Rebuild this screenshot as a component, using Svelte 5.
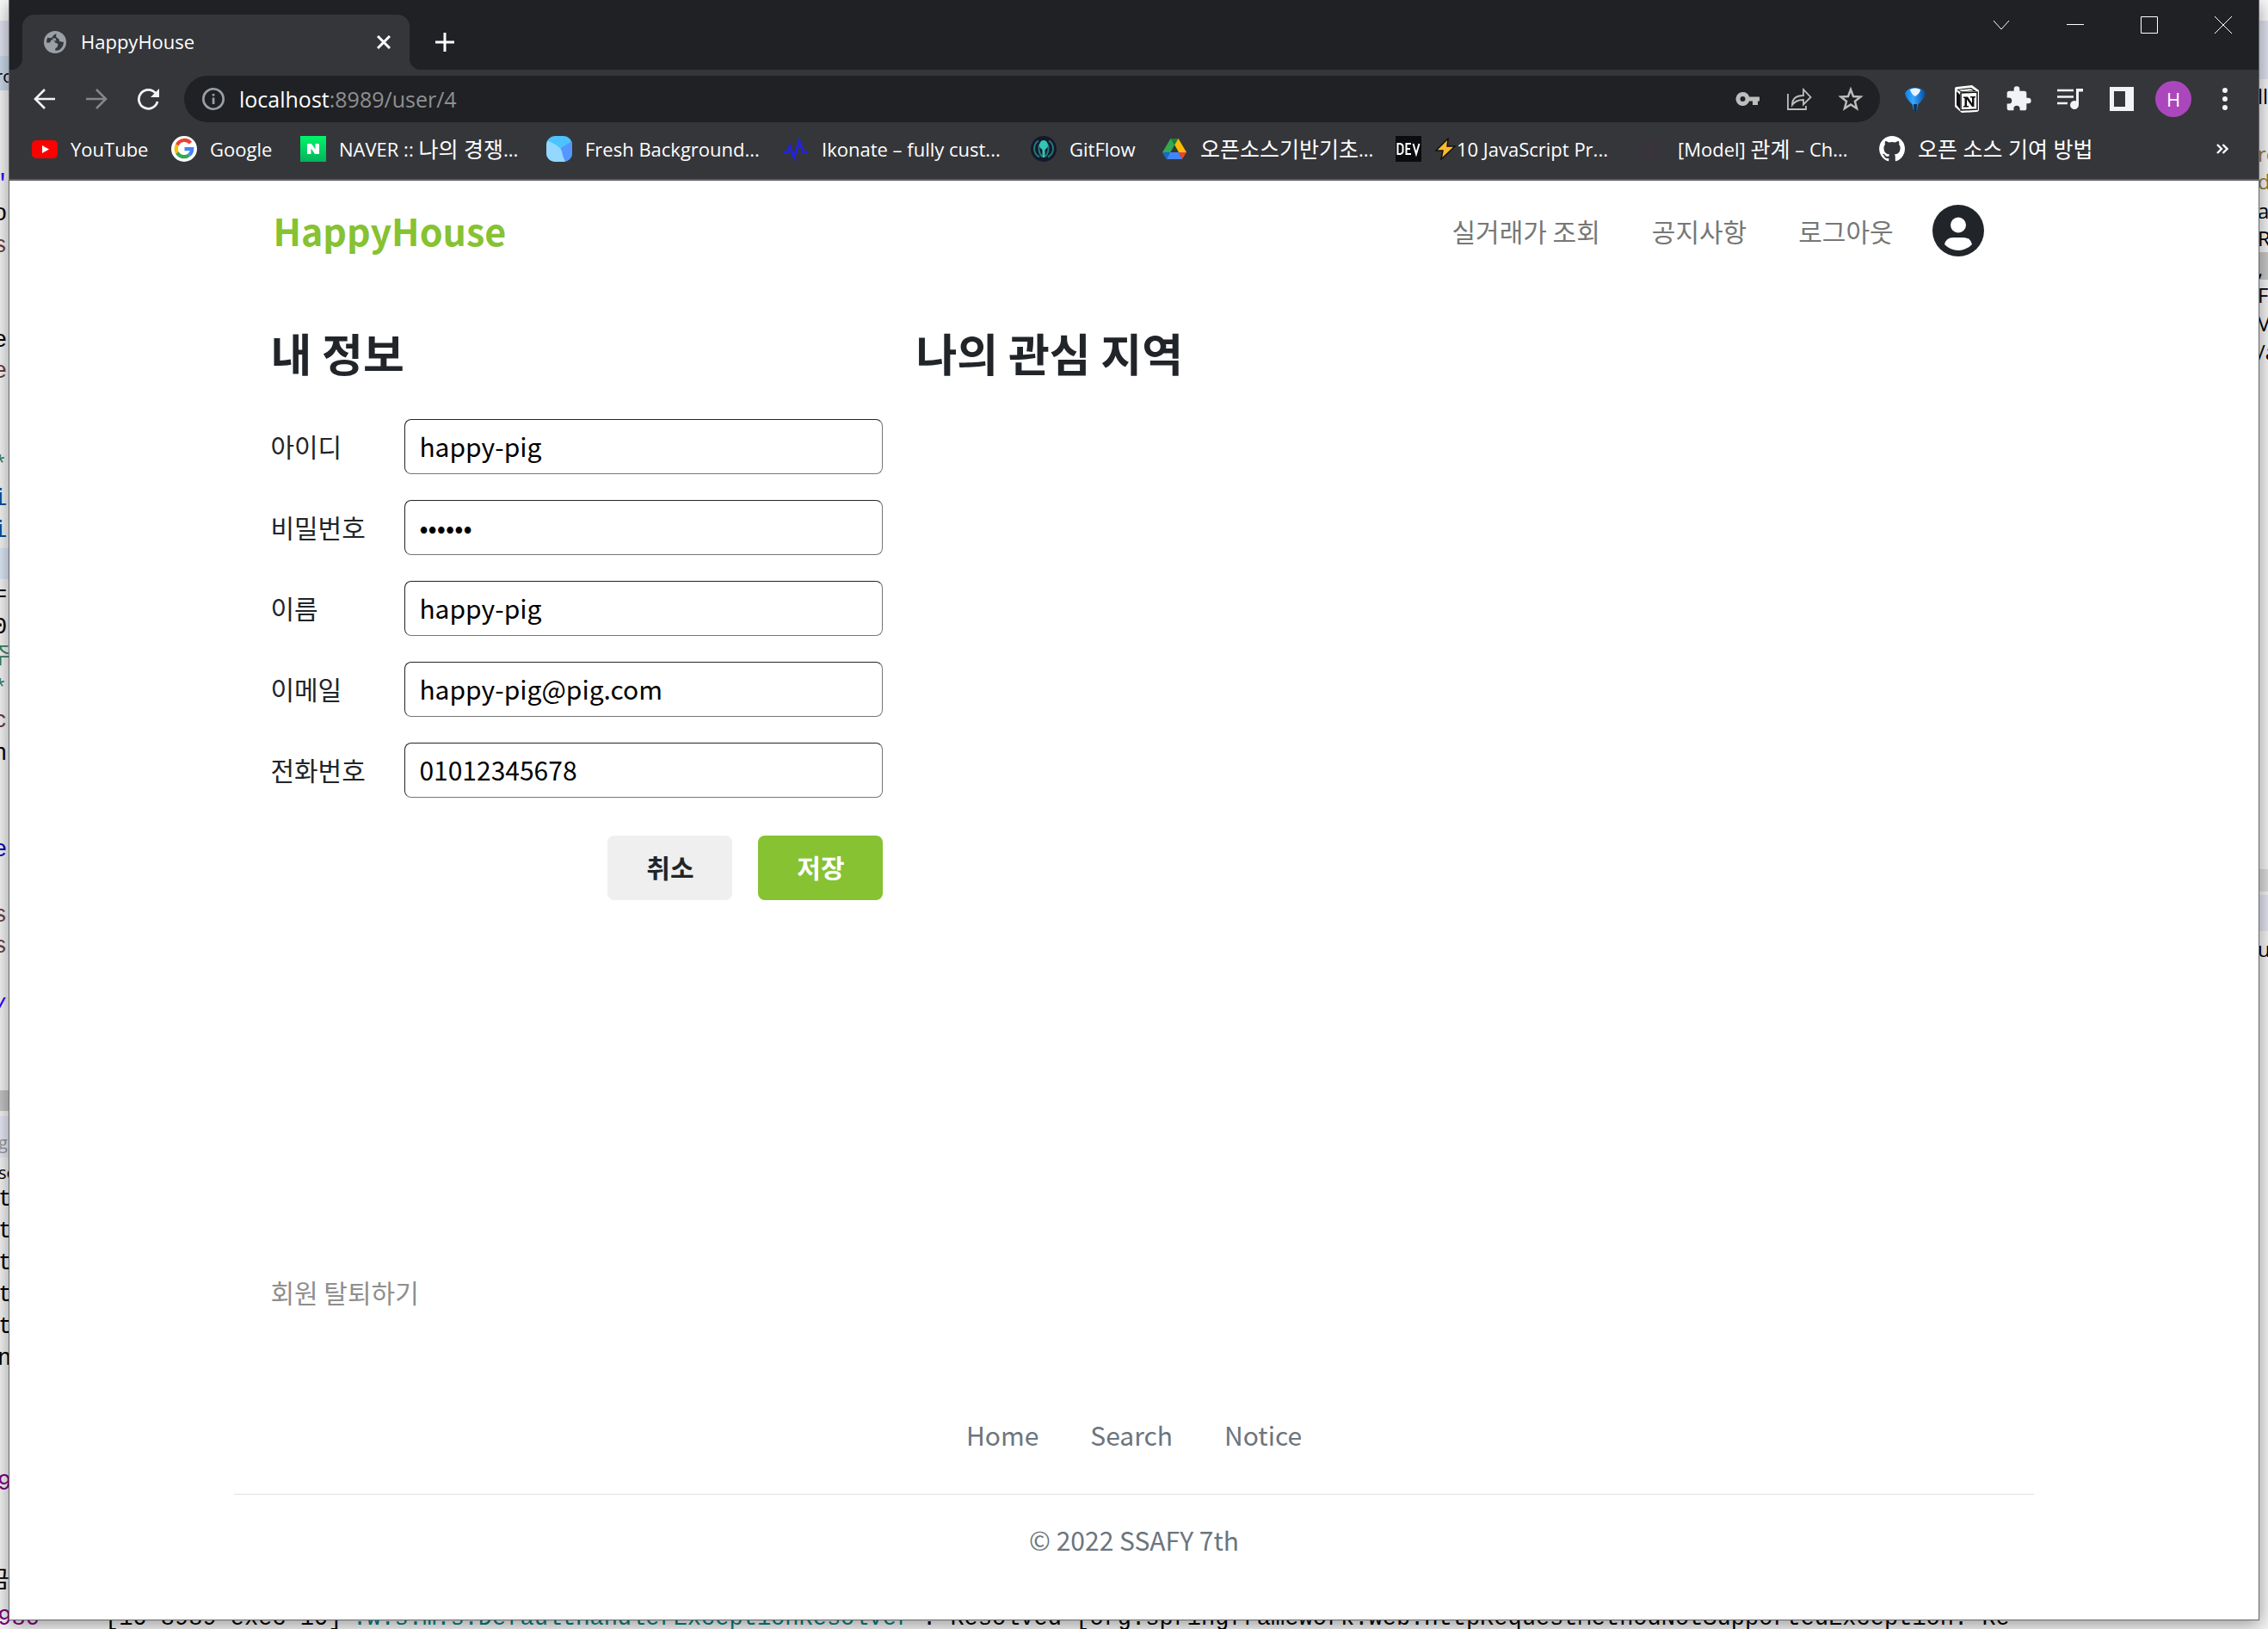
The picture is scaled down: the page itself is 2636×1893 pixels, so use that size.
<script>
  const bookmarks = [
    { icon: 'youtube', text: 'YouTube' },
    { icon: 'google', text: 'Google' },
    { icon: 'naver', text: 'NAVER :: 나의 경쟁...' },
    { icon: 'fresh', text: 'Fresh Background...' },
    { icon: 'ikonate', text: 'Ikonate – fully cust...' },
    { icon: 'gitflow', text: 'GitFlow' },
    { icon: 'drive', text: '오픈소스기반기초...' },
    { icon: 'dev', text: '10 JavaScript Pr...', bolt: true },
    { icon: 'blank', text: '[Model] 관계 – Ch...' },
    { icon: 'github', text: '오픈 소스 기여 방법' },
  ];
  const split = (t) => t.split(/([\uAC00-\uD7A3]+(?: [\uAC00-\uD7A3]+)*)/).filter((s) => s);
  const isKo = (s) => /[\uAC00-\uD7A3]/.test(s);

  let fields = $state([
    { id: 'userid', label: '아이디', type: 'text', value: 'happy-pig' },
    { id: 'password', label: '비밀번호', type: 'password', value: 'secret' },
    { id: 'name', label: '이름', type: 'text', value: 'happy-pig' },
    { id: 'email', label: '이메일', type: 'text', value: 'happy-pig@pig.com' },
    { id: 'phone', label: '전화번호', type: 'text', value: '01012345678' },
  ]);

  // Code editor behind the browser: fragments visible at its left and right edges
  const left = [
    { y: 89, x: -5, t: 'ro', c: '#000', small: true }, { y: 214, t: '"', c: '#2a00ff' }, { y: 249, t: 'os', c: '#000' },
    { y: 286, t: 'st', c: '#6a3e3e' }, { y: 396, t: 'er', c: '#000' }, { y: 432, t: 'er', c: '#6a3e3e' },
    { y: 506, x: 6, t: '-', c: '#000' }, { y: 541, t: '*', c: '#3f7f5f' }, { y: 580, t: 'in', c: '#0050a0' },
    { y: 617, t: 'in', c: '#0050a0' }, { y: 692, t: '=', c: '#000' }, { y: 729, t: '0n', c: '#000' },
    { y: 764, x: -12, t: '주', c: '#3f7f5f' }, { y: 801, t: '*', c: '#3f7f5f' }, { y: 838, t: 'c:', c: '#6a3e3e' },
    { y: 876, t: 'nl', c: '#000' }, { y: 988, t: 'er', c: '#0000c0' }, { y: 1064, t: 's', c: '#6a3e3e' },
    { y: 1100, t: 's', c: '#6a3e3e' }, { y: 1172, t: '/p', c: '#2a00ff' }, { y: 1328, x: -2, t: 'g', c: '#999', small: true },
    { y: 1363, x: -2, t: 'se', c: '#000', small: true }, { y: 1394, x: -2, t: 't', c: '#000' }, { y: 1431, x: -2, t: 't', c: '#000' },
    { y: 1468, x: -2, t: 't', c: '#000' }, { y: 1505, x: -2, t: 't', c: '#000' }, { y: 1542, x: -2, t: 't', c: '#000' },
    { y: 1579, x: -3, t: 'n', c: '#000' }, { y: 1724, x: -3, t: '9', c: '#7f007f' }, { y: 1838, x: -14, t: '금', c: '#000' },
  ];
  const right = [
    { y: 112, t: 'll', c: '#000' }, { y: 179, t: 'ro', c: '#937a3c' }, { y: 211, t: 'd"', c: '#937a3c' },
    { y: 245, t: 'a', c: '#000' }, { y: 277, t: 'Re', c: '#000' }, { y: 312, t: ',', c: '#000' },
    { y: 343, t: 'F', c: '#000' }, { y: 376, t: 'V', c: '#000' }, { y: 409, t: '/a', c: '#000' },
    { y: 1103, t: 'us', c: '#000' },
  ];
</script>

{#snippet mark(name)}
  <svg class="mark" viewBox="0 0 30 30" aria-hidden="true">
    {#if name === 'youtube'}
      <rect x="0" y="5" width="30" height="21" rx="5" fill="#f00" /><path d="M12 11l8 4.500-8 4.500z" fill="#fff" />
    {:else if name === 'google'}
      <circle cx="15" cy="15" r="15" fill="#fff" />
      <g fill="none" stroke-width="4.200">
        <path d="M22.500 8.200A9.300 9.300 0 0 0 6.900 10.500" stroke="#ea4335" />
        <path d="M6.900 10.500A9.300 9.300 0 0 0 6.900 19.500" stroke="#fbbc05" />
        <path d="M6.900 19.500A9.300 9.300 0 0 0 21 22" stroke="#34a853" />
        <path d="M21 22A9.300 9.300 0 0 0 24.200 15.100H15.500" stroke="#4285f4" />
      </g>
    {:else if name === 'naver'}
      <defs><linearGradient id="nv" x1="0" y1="0" x2="0" y2="1"><stop offset="0" stop-color="#00f56a" /><stop offset="1" stop-color="#04b35c" /></linearGradient></defs>
      <rect width="30" height="30" fill="url(#nv)" /><path d="M8 9h5l4.500 6.500V9H22v12h-5l-4.500-6.500V21H8z" fill="#fff" />
    {:else if name === 'fresh'}
      <defs><clipPath id="fb"><rect width="30" height="30" rx="10" /></clipPath></defs>
      <g clip-path="url(#fb)"><rect width="30" height="30" fill="#4cc3ff" /><path d="M30 6L17 14q-3 8 4 16h9z" fill="#5596ff" /><path d="M0 5q16 6 18 13 1 6 4 12H0z" fill="#94d8ff" /></g>
    {:else if name === 'ikonate'}
      <path d="M1 19h4l3-7 5 13 6-19 5 13h5" fill="none" stroke="#2323dd" stroke-width="3" />
    {:else if name === 'gitflow'}
      <circle cx="15" cy="15" r="15" fill="#141a2b" /><path d="M9 5.500a11 11 0 0 0 1 19M21 5.500a11 11 0 0 1-1 19M10 10q-2 8 3 14M20 10q2 8-3 14" fill="none" stroke="#237a7c" stroke-width="2" /><path d="M15 5c4 0 6 5 4.500 8-1 2-3 2-3 4v8h-3v-8c0-2-2-2-3-4C9 10 11 5 15 5z" fill="#35c5b5" />
    {:else if name === 'drive'}
      <path d="M10.500 3h9l-4.500 8L6 27l-5-8z" fill="#34a853" /><path d="M19.500 3L29 19h-9L11 3z" fill="#fbbc04" /><path d="M15 11l-4.500-8h9z" fill="#188038" /><path d="M10 19h10l4 8H6z" fill="#4285f4" /><path d="M20 19h9l-5 8z" fill="#ea4335" /><path d="M1 19h9l-4 8z" fill="#1967d2" /><path d="M15 11l4.500 8h-9z" fill="#35363a" />
    {:else if name === 'dev'}
      <rect width="30" height="30" fill="#0b0c0e" />
      <path d="M2.500 9v12h3q3-1 3-3v-6q0-2-3-3zM18 9h-5.500v12H18M12.500 15H17M20.500 9L24 21 27.500 9" fill="none" stroke="#fff" stroke-width="2" />
    {:else if name === 'blank'}
      <circle cx="13" cy="15" r="13" fill="#37353b" />
    {:else}
      <path d="M15 0a15 15 0 0 0-4.700 29.200c.7.100 1-.3 1-.7v-2.600c-4.200.9-5-2-5-2-.7-1.700-1.700-2.200-1.700-2.200-1.300-.9.100-.9.100-.9 1.500.1 2.300 1.500 2.300 1.500 1.300 2.300 3.500 1.600 4.400 1.200.1-1 .5-1.600.9-2-3.300-.4-6.800-1.700-6.800-7.400 0-1.600.6-3 1.500-4-.1-.4-.7-1.900.2-4 0 0 1.200-.4 4.100 1.500a14 14 0 0 1 7.500 0c2.900-1.900 4.100-1.500 4.100-1.500.8 2.100.3 3.600.2 4 1 1 1.500 2.400 1.500 4 0 5.700-3.500 7-6.800 7.400.5.500 1 1.400 1 2.800v4.200c0 .4.300.9 1 .7A15 15 0 0 0 15 0z" fill="#fff" />
    {/if}
  </svg>
{/snippet}

<div class="desktop">
  <div class="backdrop" aria-hidden="true">
    <div class="band top"></div>
    <div class="band tabs"></div>
    <div class="band file"></div>
    <div class="band selected"></div>
    <div class="band scroll"></div>
    <div class="band panel"></div>
    <div class="band rsel"></div>
    <div class="band rscroll"></div>
    <div class="band rpanel"></div>
    {#each left as f}<span class="frag" class:small={f.small} style:top="{f.y - 16}px" style:left="{f.x ?? -8}px" style:color={f.c}>{f.t}</span>{/each}
    {#each right as f}<span class="frag r" style:top="{f.y - 16}px" style:color={f.c}>{f.t}</span>{/each}
    <div class="console">
      <span class="pid">9986</span>
      <span class="thread">[10-8989-exec-10]</span>
      <span class="logger">.w.s.m.s.DefaultHandlerExceptionResolver</span>
      <span class="msg">: Resolved [org.springframework.web.HttpRequestMethodNotSupportedException: Re</span>
    </div>
  </div>

  <div class="window">
    <div class="strip">
      <div class="tab">
        <svg width="26" height="26" viewBox="0 0 26 26"><circle cx="13" cy="13" r="13" fill="#9aa0a6" /><path d="M3 13.500q0-4 1.500-6 2.500 1.500 5 0 1.500-3.500 5-4.500-1 3 .5 5 3 .5 3 4l5 1q-.5 6-5 9-2.500 1-5 .5 0-3 2.500-3.500l1-4-3.500-1.500q-.5-3-4-3.500L7 13.500z" fill="#35363a" /><path d="M4 6.500q3-4 8-4-1 3-4.500 5.500zM9.500 8.500h4l1 3-3-.5z" fill="#9aa0a6" /></svg>
        <span class="tab-title">HappyHouse</span>
        <button class="bare" aria-label="Close tab"><svg width="16" height="16" viewBox="0 0 16 16"><path d="M1 1l14 14M15 1L1 15" stroke="#fff" stroke-width="3" /></svg></button>
      </div>
      <button class="bare plus" aria-label="New tab"><svg width="24" height="24" viewBox="0 0 24 24"><path d="M12 1v22M1 12h22" stroke="#fff" stroke-width="3" /></svg></button>
      <div class="controls">
        <button class="bare" aria-label="Search tabs"><svg width="20" height="20" viewBox="0 0 20 20"><path d="M1 5l9 10 9-10" stroke="#fff" fill="none" /></svg></button>
        <button class="bare" aria-label="Minimize"><svg width="20" height="20" viewBox="0 0 20 20"><path d="M0 9.500h20" stroke="#fff" /></svg></button>
        <button class="bare" aria-label="Maximize"><svg width="20" height="20" viewBox="0 0 20 20"><path d="M.5.5h19v19H.5z" stroke="#fff" fill="none" /></svg></button>
        <button class="bare" aria-label="Close"><svg width="20" height="20" viewBox="0 0 20 20"><path d="M0 0l20 20M20 0L0 20" stroke="#fff" /></svg></button>
      </div>
    </div>

    <div class="toolbar">
      <button class="bare slot" aria-label="Back"><svg width="26" height="26" viewBox="0 0 26 26"><path d="M25 13H2M13 2L2 13l11 11" stroke="#f1f3f4" stroke-width="2.600" fill="none" /></svg></button>
      <button class="bare slot" aria-label="Forward"><svg width="26" height="26" viewBox="0 0 26 26"><path d="M1 13h23M13 2l11 11-11 11" stroke="#85868a" stroke-width="2.600" fill="none" /></svg></button>
      <button class="bare slot" aria-label="Reload"><svg width="26" height="26" viewBox="0 0 26 26"><path d="M22 6.500A11 11 0 1 0 24 16" stroke="#f1f3f4" stroke-width="2.800" fill="none" /><path d="M26 1v10H16z" fill="#f1f3f4" /></svg></button>
      <div class="omnibox">
        <svg width="26" height="26" viewBox="0 0 26 26"><circle cx="13" cy="13" r="11.700" stroke="#9aa0a6" stroke-width="2.600" fill="none" /><path d="M11.700 11.500h2.700V19h-2.700zM11.700 7h2.700v2.600h-2.700z" fill="#9aa0a6" /></svg>
        <span class="url"><b>localhost</b>:8989/user/4</span>
        <button class="bare slot" aria-label="Passwords"><svg width="28" height="28" viewBox="0 0 28 28"><path fill-rule="evenodd" d="M8.500 6a8 8 0 1 0 7.600 10.500H20V21h6v-4.500h2v-5H16.100A8 8 0 0 0 8.500 6zm0 5a3 3 0 1 1 0 6 3 3 0 0 1 0-6z" fill="#bdbdbd" /></svg></button>
        <button class="bare slot" aria-label="Share"><svg width="30" height="30" viewBox="0 0 30 30"><path d="M2 9v18h21v-4M7 22q0-11 13-11V4l8.500 9L20 21.500V16q-9 0-13 6z" stroke="#bdbdbd" stroke-width="1.800" fill="none" /></svg></button>
        <button class="bare slot" aria-label="Bookmark"><svg width="30" height="30" viewBox="0 0 30 30"><path d="M15 4l3 8 8.500.5-6.600 5.300 2.200 8.200L15 21.400 7.900 26l2.200-8.200L3.500 12.500 12 12z" stroke="#bdbdbd" stroke-width="2.400" fill="none" /></svg></button>
      </div>
      <div class="tools">
        <button class="bare slot" aria-label="Balloon extension"><svg width="30" height="30" viewBox="0 0 30 30"><defs><linearGradient id="bl"><stop offset="0" stop-color="#0a7fe8" /><stop offset=".4" stop-color="#3aa8ff" /><stop offset="1" stop-color="#034a9c" /></linearGradient></defs><path d="M3 8Q6 2 15 2t12 6q0 5-9 14l-1 6q-2 1-4 0l-1-6Q3 13 3 8z" fill="url(#bl)" /><path d="M9 4q6-3 12 0 0 4-6 8-5-3-6-8z" fill="#e8f5ff" /><path d="M13 21h4l-.5 8h-3z" fill="#07315e" /></svg></button>
        <button class="bare slot" aria-label="Notion"><svg width="30" height="32" viewBox="0 0 30 32"><path d="M1 4q0-2 2-2l18-2 8 6v22q0 3-3 3L9 32l-8-7z" fill="#fff" /><path d="M3 5l17-2 6 4-18 1zM3 7l4 4v17l-4-5z" fill="#111" /><path d="M5.500 5.500l14-1.300 3.500 2-14 1z" fill="#fff" /><path d="M8 9l19-1v20L8 29z" fill="#fff" stroke="#111" stroke-width="1.500" /><path d="M11 13.500h5l5 7.500v-6.500h-2v-1.500h6v1.500h-1.500V25H21l-6-8.500V24h2v1.500h-6V24h1.500v-9H11z" fill="#111" /></svg></button>
        <button class="bare slot" aria-label="Extensions"><svg width="32" height="32" viewBox="0 0 24 24"><path d="M20.500 11H19V7a2 2 0 0 0-2-2h-4V3.500a2.500 2.500 0 0 0-5 0V5H4a2 2 0 0 0-2 2v3.800h1.500a2.700 2.700 0 0 1 0 5.400H2V20c0 1.100.9 2 2 2h3.800v-1.500a2.700 2.700 0 0 1 5.400 0V22H17a2 2 0 0 0 2-2v-4h1.500a2.500 2.500 0 0 0 0-5z" fill="#f1f3f4" /></svg></button>
        <button class="bare slot" aria-label="Media"><svg width="32" height="28" viewBox="0 0 32 28"><path d="M1 4h19M1 11.500h19M1 19h12" stroke="#f1f3f4" stroke-width="2.600" /><path d="M23 2h8v3.500h-5V21a5 5 0 1 1-3-4.500z" fill="#f1f3f4" /></svg></button>
        <button class="bare slot" aria-label="Side panel"><svg width="28" height="28" viewBox="0 0 28 28"><path fill-rule="evenodd" d="M0 0h28v28H0zM5 5v18h13V5z" fill="#f1f3f4" /></svg></button>
        <button class="bare slot" aria-label="Profile"><span class="profile">H</span></button>
        <button class="bare slot" aria-label="Menu"><svg width="8" height="28" viewBox="0 0 8 28"><g fill="#f1f3f4"><circle cx="4" cy="4" r="3" /><circle cx="4" cy="14" r="3" /><circle cx="4" cy="24" r="3" /></g></svg></button>
      </div>
    </div>

    <div class="bookmarks">
      {#each bookmarks as b}
        <a href="#top" class="bm">
          {@render mark(b.icon)}
          <span class="bm-text">{#if b.bolt}<svg class="bolt" viewBox="0 0 26 26" aria-hidden="true"><path d="M16 1L2 15h8L8 25 24 10h-9z" fill="#fdb92c" stroke="#111" stroke-width="1.500" /></svg>{/if}{#each split(b.text) as s}<span class:ko={isKo(s)}>{s}</span>{/each}</span>
        </a>
      {/each}
      <button class="bare more" aria-label="More bookmarks"><svg width="14" height="12" viewBox="0 0 14 12"><path d="M1 1l5 5-5 5M7.500 1l5 5-5 5" stroke="#fff" stroke-width="2.400" fill="none" /></svg></button>
    </div>

    <div class="page" id="top">
      <header>
        <a href="#top" class="brand">HappyHouse</a>
        <nav>
          <a href="#top">실거래가 조회</a>
          <a href="#top">공지사항</a>
          <a href="#top">로그아웃</a>
        </nav>
        <a href="#top" class="avatar" aria-label="내 정보"><svg width="60" height="60" viewBox="0 0 60 60"><circle cx="30" cy="30" r="30" fill="#212529" /><circle cx="30" cy="23.500" r="9" fill="#fff" /><path d="M14 46q2-8 10-8h12q8 0 10 8-7 7-16 7t-16-7z" fill="#fff" /></svg></a>
      </header>

      <main>
        <div class="columns">
          <section>
            <h2>내 정보</h2>
            <form onsubmit={(e) => e.preventDefault()}>
              {#each fields as f}
                <div class="row">
                  <label for={f.id}>{f.label}</label>
                  <input id={f.id} type={f.type} bind:value={f.value} />
                </div>
              {/each}
              <div class="actions">
                <button type="button" class="cancel">취소</button>
                <button type="submit" class="save">저장</button>
              </div>
            </form>
          </section>
          <section>
            <h2>나의 관심 지역</h2>
          </section>
        </div>
        <a href="#top" class="leave">회원 탈퇴하기</a>
      </main>

      <footer>
        <div class="links">
          <a href="#top">Home</a>
          <a href="#top">Search</a>
          <a href="#top">Notice</a>
        </div>
        <p>© 2022 SSAFY 7th</p>
      </footer>
    </div>
  </div>
</div>

<style>
  :global(body) { margin: 0; }
  * { box-sizing: border-box; }
  a { text-decoration: none; color: inherit; }
  button { font-family: inherit; cursor: pointer; }
  svg { display: block; flex: none; }
  .bare { display: flex; align-items: center; justify-content: center; padding: 0; border: 0; background: none; color: #fff; }

  .desktop { position: relative; min-height: 100vh; padding: 0 10px 10px; overflow: hidden; background: #f4f4f5; display: flex; flex-direction: column; }

  .backdrop { position: absolute; inset: 0; font-family: "Liberation Mono", "Noto Sans CJK KR", monospace; font-size: 27px; line-height: 32px; overflow: hidden; white-space: pre; }
  .frag { position: absolute; }
  .small { font-family: "Open Sans", sans-serif; font-size: 20px; }
  .frag.r { left: calc(100% - 12px); font-family: "Open Sans", sans-serif; font-size: 24px; }
  .band { position: absolute; left: 0; right: 0; }
  .top { top: 0; height: 24px; background: #fafafa; }
  .tabs { top: 24px; height: 68px; background: #dfe2ef; }
  .file { top: 65px; height: 40px; right: 50%; background: #c9d8e8; }
  .selected { top: 637px; height: 36px; right: 50%; background: #dce8f6; }
  .scroll { top: 1267px; height: 24px; right: 50%; background: #c4c4c4; }
  .panel { top: 1297px; height: 48px; right: 50%; background: #e6e9f6; }
  .rsel { top: 293px; height: 32px; left: 50%; background: #c8c8c8; }
  .rscroll { top: 1010px; height: 26px; left: 50%; background: #dcdcdc; }
  .rpanel { top: 1040px; height: 42px; left: 50%; background: #e2e4ef; }
  .console span { position: absolute; bottom: -4px; }
  .pid { left: -19px; color: #7f007f; }
  .thread { left: 122px; }
  .logger { left: 410px; color: #007f7f; }
  .msg { left: 1072px; }

  .window { position: relative; flex: 1; display: flex; flex-direction: column; background: #fff; border: 1px solid #66676a; border-top: 0; box-shadow: 0 4px 20px rgba(0, 0, 0, .4); font-family: "Open Sans", "Noto Sans CJK KR", sans-serif; }

  .strip { display: flex; align-items: flex-end; height: 81px; background: #202124; }
  .tab { position: relative; display: flex; align-items: center; width: 450px; height: 64px; margin-left: 15px; padding: 0 22px 0 25px; border-radius: 14px 14px 0 0; background: #35363a; color: #fff; }
  .tab::before, .tab::after { content: ""; position: absolute; bottom: 0; width: 14px; height: 14px; }
  .tab::before { left: -14px; background: radial-gradient(circle at 0 0, #202124 14px, #35363a 15px); }
  .tab::after { right: -14px; background: radial-gradient(circle at 100% 0, #202124 14px, #35363a 15px); }
  .tab-title { flex: 1; padding: 0 0 2px 17px; font-size: 22px; line-height: 32px; }
  .plus { width: 82px; height: 64px; }
  .controls { display: flex; gap: 4px; align-self: flex-start; margin-left: auto; }
  .controls .bare { width: 82px; height: 58px; }

  .toolbar { display: flex; align-items: center; height: 67px; padding: 0 9px 0 11px; background: #35363a; }
  .slot { width: 60px; height: 52px; flex: none; }
  .omnibox { flex: 1; display: flex; align-items: center; height: 54px; margin-left: 12px; padding: 0 4px 0 21px; border-radius: 27px; background: #202124; }
  .url { flex: 1; padding-left: 17px; color: #8e9093; font-size: 25px; line-height: 36px; }
  .url b { font-weight: 400; color: #fff; }
  .tools { display: flex; margin-left: 11px; }
  .profile { width: 42px; height: 42px; border-radius: 50%; background: #ab47bc; color: #fff; font-size: 22px; line-height: 42px; text-align: center; }

  .bookmarks { display: grid; grid-template-columns: 162px 150px 286px 275px 288px 152px 272px 283px 279px 1fr 60px; align-items: center; height: 62px; padding: 0 12px 10px 26px; border-bottom: 2px solid #5f6064; background: #35363a; color: #fff; white-space: nowrap; }
  .bm { display: flex; align-items: center; gap: 15px; }
  .mark { width: 30px; height: 30px; }
  .bm-text { display: flex; align-items: center; white-space: pre; font-size: 22px; line-height: 32px; }
  .ko { font-size: 25px; }
  .bolt { width: 26px; height: 26px; }
  .more { height: 40px; }

  .page { flex: 1; width: 80%; margin: 0 auto; font-family: "Noto Sans CJK KR", "Noto Sans", sans-serif; color: #212529; }
  header { display: flex; align-items: center; height: 116px; padding: 0 58px 0 45px; }
  .brand { flex: 1; padding-bottom: 2px; color: #86c232; font-size: 43px; line-height: 60px; font-weight: 700; }
  nav { display: flex; gap: 60px; margin-right: 45px; color: #777; font-size: 30px; line-height: 44px; }
  main { padding: 48px 42px 0; }
  .columns { display: grid; grid-template-columns: 712px 1fr; gap: 38px; min-height: 1105px; }
  h2 { margin: 0 0 41px; font-size: 52px; line-height: 72px; font-weight: 700; }
  form { display: flex; flex-direction: column; gap: 30px; }
  .row { display: grid; grid-template-columns: 156px 1fr; align-items: center; }
  label { padding-bottom: 2px; font-size: 30px; line-height: 44px; }
  input { width: 100%; height: 64px; padding: 0 16px 2px; border: 1px solid #767676; border-top-color: #212529; border-left-color: #212529; border-radius: 8px; background: #fff; color: #000; font-family: inherit; font-size: 30px; outline: none; }
  .actions { display: flex; justify-content: flex-end; gap: 30px; padding-top: 14px; }
  .actions button { width: 145px; height: 75px; padding: 0 0 3px; border: 0; border-radius: 8px; font-size: 30px; font-weight: 700; }
  .cancel { background: #efefef; color: #212529; }
  .save { background: #86c232; color: #fff; }
  .leave { display: inline-block; color: #8e8e8e; font-size: 30px; line-height: 45px; }
  footer { margin-top: 119px; color: #6c757d; font-size: 30px; line-height: 48px; text-align: center; }
  .links { display: flex; justify-content: center; gap: 60px; padding-bottom: 45px; border-bottom: 1px solid #dee2e6; }
  footer p { margin: 28px 0; }
</style>
